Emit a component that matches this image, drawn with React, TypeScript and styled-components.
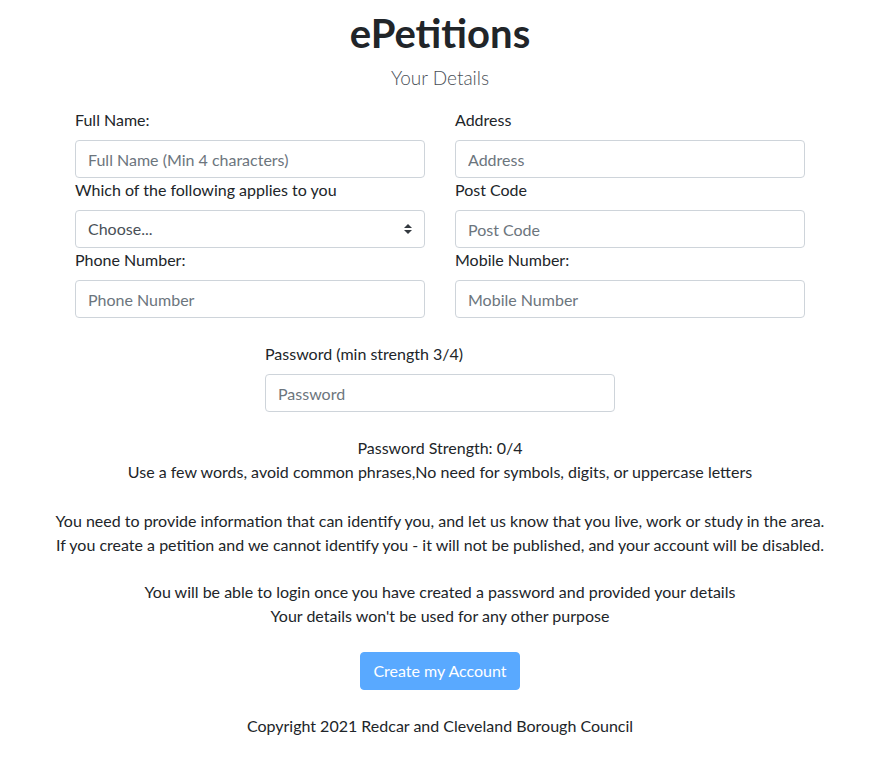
import React from "react";
import styled, { createGlobalStyle } from "styled-components";

const GlobalStyle = createGlobalStyle`
  *, *::before, *::after { box-sizing: border-box; }
  body {
    margin: 0;
    background: #ffffff;
    color: #212529;
    font-family: Lato, "Liberation Sans", sans-serif;
    font-size: 16px;
    line-height: 24px;
  }
`;

const Page = styled.main`
  padding: 9px 0 0 2px;
  display: flex;
  flex-direction: column;
  align-items: center;
`;

const Title = styled.h1`
  margin: 0 0 8px;
  font-size: 40px;
  line-height: 48px;
  font-weight: 700;
  color: #212529;
`;

const Subtitle = styled.h2`
  margin: 1px 0 18px;
  font-size: 19px;
  line-height: 24px;
  font-weight: 300;
  color: #4a5057;
`;

const FormGrid = styled.div`
  width: 730px;
  display: grid;
  grid-template-columns: 350px 350px;
  column-gap: 30px;
`;

const Field = styled.div`
  display: flex;
  flex-direction: column;
`;

const Label = styled.label`
  display: block;
  margin-bottom: 8px;
  line-height: 24px;
  color: #212529;
`;

const Input = styled.input`
  width: 100%;
  height: 38px;
  padding: 6px 12px;
  font-family: inherit;
  font-size: 16px;
  line-height: 24px;
  color: #495057;
  background: #fff;
  border: 1px solid #ced4da;
  border-radius: 4px;
  outline: none;
  &::placeholder {
    color: #6c757d;
    opacity: 1;
  }
`;

const SelectWrap = styled.div`
  position: relative;
`;

const Select = styled.select`
  width: 100%;
  height: 38px;
  padding: 6px 28px 6px 12px;
  font-family: inherit;
  font-size: 16px;
  line-height: 24px;
  color: #495057;
  background: #fff;
  border: 1px solid #ced4da;
  border-radius: 4px;
  appearance: none;
  -webkit-appearance: none;
  outline: none;
`;

const SelectArrow = styled.svg`
  position: absolute;
  right: 13px;
  top: 14px;
  width: 8px;
  height: 10px;
  pointer-events: none;
`;

const PasswordField = styled(Field)`
  width: 350px;
  margin-top: 24px;
`;

const Notes = styled.div`
  margin-top: 24px;
  text-align: center;
  line-height: 24px;
`;

const Line = styled.div<{ $gap?: number }>`
  margin-top: ${(p) => p.$gap ?? 0}px;
`;

const SubmitButton = styled.button`
  margin-top: 24px;
  height: 38px;
  padding: 6px 12px;
  font-family: inherit;
  font-size: 16px;
  line-height: 24px;
  color: #fff;
  background: #59a9ff;
  border: 1px solid #59a9ff;
  border-radius: 4px;
  cursor: default;
`;

const Footer = styled.footer`
  margin-top: 24px;
  line-height: 24px;
  text-align: center;
`;

function TextField({ label, placeholder, type = "text" }: { label: string; placeholder: string; type?: string }) {
  return (
    <Field>
      <Label>{label}</Label>
      <Input type={type} placeholder={placeholder} />
    </Field>
  );
}

export default function App() {
  return (
    <>
      <GlobalStyle />
      <Page>
        <Title>ePetitions</Title>
        <Subtitle>Your Details</Subtitle>
        <FormGrid>
          <TextField label="Full Name:" placeholder="Full Name (Min 4 characters)" />
          <TextField label="Address" placeholder="Address" />
          <Field>
            <Label>Which of the following applies to you</Label>
            <SelectWrap>
              <Select defaultValue="">
                <option value="">Choose...</option>
                <option value="live">I live in the area</option>
                <option value="work">I work in the area</option>
                <option value="study">I study in the area</option>
              </Select>
              <SelectArrow viewBox="0 0 4 5">
                <path fill="#343a40" d="M2 0L0 2h4zm0 5L0 3h4z" />
              </SelectArrow>
            </SelectWrap>
          </Field>
          <TextField label="Post Code" placeholder="Post Code" />
          <TextField label="Phone Number:" placeholder="Phone Number" type="tel" />
          <TextField label="Mobile Number:" placeholder="Mobile Number" type="tel" />
        </FormGrid>
        <PasswordField>
          <Label>Password (min strength 3/4)</Label>
          <Input type="password" placeholder="Password" />
        </PasswordField>
        <Notes>
          <Line>Password Strength: 0/4</Line>
          <Line>Use a few words, avoid common phrases,No need for symbols, digits, or uppercase letters</Line>
          <Line $gap={25}>
            You need to provide information that can identify you, and let us know that you live, work or study in the area.
          </Line>
          <Line>
            If you create a petition and we cannot identify you - it will not be published, and your account will be disabled.
          </Line>
          <Line $gap={23}>You will be able to login once you have created a password and provided your details</Line>
          <Line>Your details won't be used for any other purpose</Line>
        </Notes>
        <SubmitButton type="button" disabled>
          Create my Account
        </SubmitButton>
        <Footer>Copyright 2021 Redcar and Cleveland Borough Council</Footer>
      </Page>
    </>
  );
}
